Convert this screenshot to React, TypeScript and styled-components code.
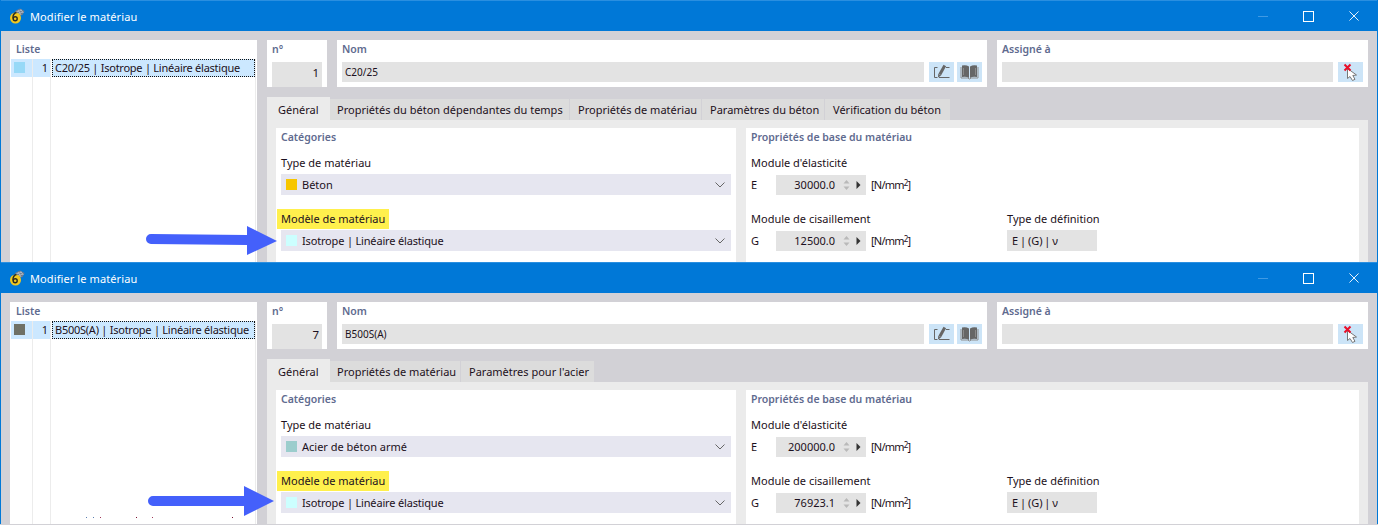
import React from 'react'
import styled, { createGlobalStyle } from 'styled-components'

const GlobalStyle = createGlobalStyle`
  html, body {
    margin: 0;
    padding: 0;
    overflow: hidden;
    background: #d2d1d6;
  }
  * {
    box-sizing: border-box;
  }
`

interface TabData {
  label: string
  width: number
}

interface WindowData {
  swatch: string
  name: string
  number: number
  tabs: TabData[]
  typeSwatch: string
  typeName: string
  e: string
  g: string
  arrow: string
  specks?: boolean
}

const windows: WindowData[] = [
  {
    swatch: '#97d9f7',
    name: 'C20/25',
    number: 1,
    tabs: [
      { label: 'Général', width: 63 },
      { label: 'Propriétés du béton dépendantes du temps', width: 240 },
      { label: 'Propriétés de matériau', width: 132 },
      { label: 'Paramètres du béton', width: 123 },
      { label: 'Vérification du béton', width: 126 },
    ],
    typeSwatch: '#f7c600',
    typeName: 'Béton',
    e: '30000.0',
    g: '12500.0',
    arrow: 'M151 234 L247 235 V226 L277 241 L247 255 V245 L151 244 A5 5 0 0 1 151 234 Z',
  },
  {
    swatch: '#6f7166',
    name: 'B500S(A)',
    number: 7,
    tabs: [
      { label: 'Général', width: 63 },
      { label: 'Propriétés de matériau', width: 131 },
      { label: "Paramètres pour l'acier", width: 134 },
    ],
    typeSwatch: '#9bcdcd',
    typeName: 'Acier de béton armé',
    e: '200000.0',
    g: '76923.1',
    arrow: 'M153 234 H244 V224 L274 239 L244 254 V244 H153 A5 5 0 0 1 153 234 Z',
    specks: true,
  },
]

const EditIcon = () => (
  <svg width="25" height="20" viewBox="0 0 25 20">
    <path d="M8.5 5.5H5.5V15.5H8.5M17 5.5H20.5M10 15.5H20.5" stroke="#666" strokeWidth="1" fill="none" />
    <path d="M15.8 3.5L10.8 12.5" stroke="#666" strokeWidth="3" fill="none" />
    <path d="M9.2 11.8L12.2 13.4L9 15.5Z" fill="#666" />
  </svg>
)

const BookIcon = () => (
  <svg width="25" height="20" viewBox="0 0 25 20">
    <path d="M5 3.5Q9 2.5 12 4.5V16Q9 14 5 15Z" fill="#666" />
    <path d="M20 3.5Q16 2.5 13 4.5V16Q16 14 20 15Z" fill="#666" />
    <path d="M4 5V16H10.5L12.5 17L14.5 16H21V5" stroke="#8f8f8f" strokeWidth="1" fill="none" />
    <path d="M6.5 6V13M18.5 6V13" stroke="#8a8a8a" strokeWidth="1" />
  </svg>
)

const PickIcon = () => (
  <svg width="25" height="20" viewBox="0 0 25 20">
    <path
      d="M9.5 6.5V16.5L12 14.5L14.5 18.5L17 17.3L14.8 13.5L18.5 13Z"
      fill="#fff"
      stroke="#777"
      strokeWidth="1"
    />
    <path d="M6.5 2.5L12.5 8.5M12.5 2.5L6.5 8.5" stroke="#e8102a" strokeWidth="2" />
  </svg>
)

const AppIcon = () => (
  <svg width="16" height="16" viewBox="0 0 16 16">
    <path d="M6 3L11 0.5L15.5 3L13.5 7L9 8Z" fill="#6f7c90" />
    <path d="M7 4L13 2M8 6L14 4M9 2L12 7M11.5 1.5L14.5 5" stroke="#c9d3de" strokeWidth="0.6" />
    <circle cx="6.5" cy="10" r="5.5" fill="#f2c81e" />
    <path d="M7.5 4.5C5 5 3.8 7.5 4 10.5" stroke="#2b2b20" strokeWidth="1.4" fill="none" />
    <circle cx="6.2" cy="10.8" r="2" fill="none" stroke="#2b2b20" strokeWidth="1.4" />
  </svg>
)

const Chevron = () => (
  <svg width="10" height="6" viewBox="0 0 10 6">
    <path d="M0.5 0.5L5 5L9.5 0.5" stroke="#666" strokeWidth="1" fill="none" />
  </svg>
)

const SpinArrows = () => (
  <svg width="7" height="14" viewBox="0 0 7 14">
    <path d="M3.5 2L6.5 5.5H0.5Z" fill="#b9b9b9" />
    <path d="M3.5 12L6.5 8.5H0.5Z" fill="#b9b9b9" />
  </svg>
)

const StepArrow = () => (
  <svg width="5" height="8" viewBox="0 0 5 8">
    <path d="M0.5 0L4.5 4L0.5 8Z" fill="#333" />
  </svg>
)

const Specks = () => (
  <SpeckLayer width="247" height="2" viewBox="0 0 247 2">
    {[
      [76, '#5b7fb0'],
      [83, '#5b7fb0'],
      [90, '#a0395a'],
      [126, '#7a1030'],
      [142, '#a0395a'],
      [222, '#7a1030'],
    ].map(([x, c]) => (
      <rect key={x} x={x} y="0" width="1" height="1" fill={c as string} />
    ))}
  </SpeckLayer>
)

const MaterialWindow = ({ data }: { data: WindowData }) => (
  <Frame>
    <TitleBar>
      <AppIcon />
      <TitleText>Modifier le matériau</TitleText>
      <Controls>
        <MinButton />
        <MaxButton />
        <CloseButton viewBox="0 0 11 11" width="10" height="10">
          <path d="M0.5 0.5L10.5 10.5M10.5 0.5L0.5 10.5" stroke="#fff" strokeWidth="1" />
        </CloseButton>
      </Controls>
    </TitleBar>
    <Body>
      <ListPanel>
        <PanelLabel>Liste</PanelLabel>
        <ListBody>
          <ListColumn $width={22}>
            <SwatchCell>
              <RowSwatch $color={data.swatch} />
            </SwatchCell>
          </ListColumn>
          <ListColumn $width={18}>
            <NumberCell>1</NumberCell>
          </ListColumn>
          <ListColumn $width={205}>
            <NameCell>{data.name} | Isotrope | Linéaire élastique</NameCell>
          </ListColumn>
          {data.specks && <Specks />}
        </ListBody>
      </ListPanel>
      <Main>
        <Header>
          <NumberPanel>
            <PanelLabel>n°</PanelLabel>
            <ReadOnly $align="right">{data.number}</ReadOnly>
          </NumberPanel>
          <NamePanel>
            <PanelLabel>Nom</PanelLabel>
            <FieldRow>
              <ReadOnly>{data.name}</ReadOnly>
              <IconButton>
                <EditIcon />
              </IconButton>
              <IconButton>
                <BookIcon />
              </IconButton>
            </FieldRow>
          </NamePanel>
          <AssignPanel>
            <PanelLabel>Assigné à</PanelLabel>
            <FieldRow>
              <ReadOnly />
              <IconButton>
                <PickIcon />
              </IconButton>
            </FieldRow>
          </AssignPanel>
        </Header>
        <TabBar>
          {data.tabs.map((tab, i) => (
            <Tab key={tab.label} $active={i === 0} $width={tab.width}>
              {tab.label}
            </Tab>
          ))}
        </TabBar>
        <TabContent>
          <CategoryPanel>
            <SectionTitle>Catégories</SectionTitle>
            <FieldLabel>Type de matériau</FieldLabel>
            <Select>
              <SelectSwatch $color={data.typeSwatch} />
              {data.typeName}
              <SelectChevron>
                <Chevron />
              </SelectChevron>
            </Select>
            <HighlightLabel>Modèle de matériau</HighlightLabel>
            <Select $tight>
              <SelectSwatch $color="#ccffff" />
              Isotrope | Linéaire élastique
              <SelectChevron>
                <Chevron />
              </SelectChevron>
            </Select>
          </CategoryPanel>
          <PropertyPanel>
            <SectionTitle>Propriétés de base du matériau</SectionTitle>
            <FieldLabel>Module d'élasticité</FieldLabel>
            <PropertyRow>
              <Symbol>E</Symbol>
              <Spin>
                <SpinValue>{data.e}</SpinValue>
                <SpinArrows />
                <StepArrow />
              </Spin>
              <Unit>
                [N/mm<sup>2</sup>]
              </Unit>
            </PropertyRow>
            <SplitLabels>
              <FieldLabel>Module de cisaillement</FieldLabel>
              <FieldLabel>Type de définition</FieldLabel>
            </SplitLabels>
            <SplitRow>
              <PropertyRow>
                <Symbol>G</Symbol>
                <Spin>
                  <SpinValue>{data.g}</SpinValue>
                  <SpinArrows />
                  <StepArrow />
                </Spin>
                <Unit>
                  [N/mm<sup>2</sup>]
                </Unit>
              </PropertyRow>
              <DefinitionBox>E | (G) | ν</DefinitionBox>
            </SplitRow>
          </PropertyPanel>
        </TabContent>
      </Main>
    </Body>
    <ArrowLayer width="1378" height="262" viewBox="0 0 1378 262">
      <path d={data.arrow} fill="#4460fb" />
    </ArrowLayer>
  </Frame>
)

const App = () => (
  <>
    <GlobalStyle />
    <Page>
      {windows.map((w) => (
        <MaterialWindow key={w.name} data={w} />
      ))}
    </Page>
  </>
)

const Page = styled.div`
  width: 1378px;
  height: 525px;
  overflow: hidden;
  font-family: 'Noto Sans', 'Open Sans', sans-serif;
  font-size: 11px;
  color: #1c1020;
`

const Frame = styled.section`
  position: relative;
  height: 262px;
  display: flex;
  flex-direction: column;
  overflow: hidden;
  background: #d2d1d6;
  border-left: 1px solid #0078d7;
  border-right: 1px solid #0078d7;
`

const TitleBar = styled.header`
  height: 31px;
  flex: none;
  margin: 0 -1px;
  padding-left: 9px;
  display: flex;
  align-items: center;
  background: #0078d7;
  border-top: 1px solid #2a8fe0;
`

const TitleText = styled.span`
  margin-left: 5px;
  color: #ffffff;
  font-size: 11px;
  letter-spacing: 0.1px;
`

const Controls = styled.div`
  margin-left: auto;
  margin-right: 19px;
  display: flex;
  align-items: center;
`

const MinButton = styled.span`
  width: 10px;
  height: 1px;
  margin-right: 35px;
  background: #3f9ae4;
`

const MaxButton = styled.span`
  width: 11px;
  height: 11px;
  margin-right: 35px;
  border: 1px solid #ffffff;
`

const CloseButton = styled.svg`
  display: block;
`

const Body = styled.div`
  flex: 1;
  min-height: 0;
  padding: 9px 9px 0;
  display: grid;
  grid-template-columns: 247px 1fr;
  column-gap: 10px;
`

const ListPanel = styled.div`
  display: flex;
  flex-direction: column;
  background: #ffffff;
  padding-left: 1px;
`

const PanelLabel = styled.div`
  height: 19px;
  padding: 2px 0 0 5px;
  font-weight: 600;
  font-size: 10.5px;
  color: #5f6b8f;
`

const ListBody = styled.div`
  position: relative;
  flex: 1;
  display: flex;
`

const ListColumn = styled.div<{ $width: number }>`
  width: ${(p) => p.$width}px;
  flex: none;
  border-right: 1px solid #ececec;
`

const SwatchCell = styled.div`
  height: 18px;
  padding: 3px 0 0 3px;
  background: #cce8ff;
`

const RowSwatch = styled.div<{ $color: string }>`
  width: 11px;
  height: 11px;
  background: ${(p) => p.$color};
`

const NumberCell = styled.div`
  height: 18px;
  padding-right: 2px;
  line-height: 17px;
  text-align: right;
  background: #cce8ff;
`

const NameCell = styled.div`
  height: 18px;
  margin-left: 1px;
  padding-left: 2px;
  line-height: 16px;
  white-space: nowrap;
  letter-spacing: -0.25px;
  background: #cce8ff;
  border: 1px dotted #111;
`

const SpeckLayer = styled.svg`
  position: absolute;
  left: -1px;
  bottom: 6px;
`

const Main = styled.div`
  display: flex;
  flex-direction: column;
  min-width: 0;
`

const Header = styled.div`
  display: flex;
  gap: 10px;
  height: 47px;
  flex: none;
`

const HeaderPanel = styled.div`
  background: #ffffff;
  display: flex;
  flex-direction: column;
`

const NumberPanel = styled(HeaderPanel)`
  width: 60px;
  padding: 0 5px 0 0;
  & > div:last-child {
    margin-left: 5px;
    margin-top: 3px;
  }
`

const NamePanel = styled(HeaderPanel)`
  width: 650px;
`

const AssignPanel = styled(HeaderPanel)`
  width: 371px;
`

const FieldRow = styled.div`
  display: flex;
  gap: 3px;
  margin: 3px 5px 0;
`

const ReadOnly = styled.div<{ $align?: string }>`
  flex: 1;
  height: 20px;
  min-height: 20px;
  padding: 0 3px;
  line-height: 21px;
  background: #e3e3e3;
  text-align: ${(p) => p.$align || 'left'};
  font-size: ${(p) => (p.$align ? '11.5px' : '10px')};
`

const IconButton = styled.div`
  width: 25px;
  height: 20px;
  flex: none;
  margin-left: 2px;
  background: #cce4f7;
  & + & {
    margin-left: 0;
  }
`

const TabBar = styled.div`
  height: 23px;
  margin-top: 10px;
  flex: none;
  display: flex;
  align-items: flex-end;
`

const Tab = styled.div<{ $active: boolean; $width: number }>`
  width: ${(p) => p.$width}px;
  height: ${(p) => (p.$active ? 23 : 21)}px;
  padding-left: ${(p) => (p.$active ? 11 : 7)}px;
  line-height: ${(p) => (p.$active ? 25 : 21)}px;
  white-space: nowrap;
  background: ${(p) => (p.$active ? '#ebebeb' : '#dcdcdc')};
  border-right: 1px solid ${(p) => (p.$active ? '#ebebeb' : '#d2d1d6')};

  & + & + & {
    padding-left: 8px;
  }
`

const TabContent = styled.div`
  flex: 1;
  padding: 8px 9px 0;
  display: flex;
  gap: 10px;
  background: #ebebeb;
`

const SectionPanel = styled.div`
  height: 135px;
  padding: 0 5px;
  background: #ffffff;
`

const CategoryPanel = styled(SectionPanel)`
  width: 460px;
  flex: none;
`

const PropertyPanel = styled(SectionPanel)`
  flex: 1;
`

const SectionTitle = styled.div`
  height: 26px;
  padding-top: 2px;
  font-weight: 600;
  font-size: 10.5px;
  color: #5f6b8f;
`

const FieldLabel = styled.div`
  height: 20px;
  line-height: 18px;
`

const Select = styled.div<{ $tight?: boolean }>`
  height: 21px;
  display: flex;
  align-items: center;
  padding: 0 5px;
  white-space: pre;
  letter-spacing: ${(p) => (p.$tight ? '-0.17px' : '0')};
  background: #e6e6f0;
`

const SelectSwatch = styled.span<{ $color: string }>`
  width: 11px;
  height: 11px;
  margin-right: 5px;
  flex: none;
  background: ${(p) => p.$color};
`

const SelectChevron = styled.span`
  margin-left: auto;
  display: flex;
  padding-right: 1px;
`

const HighlightLabel = styled.div`
  width: fit-content;
  height: 20px;
  margin: 14px 0 1px -4px;
  padding: 0 4px;
  line-height: 19px;
  background: #fff04d;
`

const PropertyRow = styled.div`
  height: 21px;
  display: flex;
  align-items: center;
`

const Symbol = styled.span`
  width: 25px;
  flex: none;
`

const Spin = styled.div`
  width: 90px;
  height: 20px;
  flex: none;
  padding: 0 5px;
  display: flex;
  align-items: center;
  background: #e3e3e3;
  svg + svg {
    margin-left: 6px;
  }
`

const SpinValue = styled.span`
  width: 54px;
  margin-right: 8px;
  text-align: right;
`

const Unit = styled.span`
  margin-left: 5px;
  letter-spacing: -0.8px;
  sup {
    font-size: 8px;
    line-height: 0;
    vertical-align: 3px;
  }
`

const SplitLabels = styled.div`
  display: grid;
  grid-template-columns: 256px 1fr;
  margin-top: 15px;
`

const SplitRow = styled.div`
  display: grid;
  grid-template-columns: 256px 90px;
`

const DefinitionBox = styled.div`
  height: 21px;
  padding: 0 5px;
  line-height: 21px;
  word-spacing: -1px;
  background: #e3e3e3;
`

const ArrowLayer = styled.svg`
  position: absolute;
  top: 0;
  left: -1px;
  pointer-events: none;
`

export default App
